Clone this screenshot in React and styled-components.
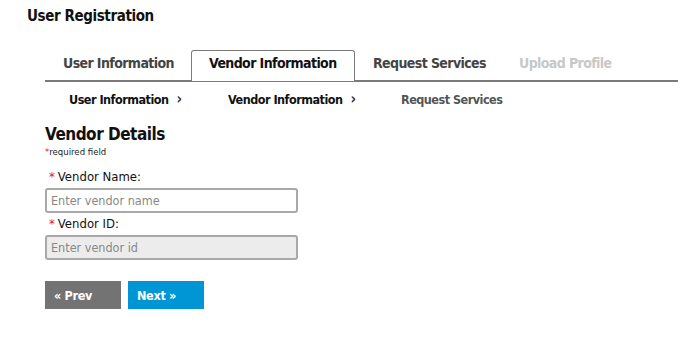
import React from 'react'
import styled, { createGlobalStyle } from 'styled-components'

const GlobalStyle = createGlobalStyle`
  html, body {
    margin: 0;
    padding: 0;
    background: #fff;
  }
  body {
    font-family: "DejaVu Sans", "Liberation Sans", sans-serif;
    font-stretch: condensed;
    color: #111;
  }
`

const StPage = styled.div`
  width: 678px;
  height: 339px;
  padding: 6px 0 0 27px;
  box-sizing: border-box;
  white-space: nowrap;
`
const StTitle = styled.h1`
  margin: 0;
  font-size: 15px;
  font-weight: bold;
  line-height: 20px;
  letter-spacing: -0.4px;
  color: #111;
`
const StTabs = styled.div`
  display: flex;
  margin: 24px 0 0 18px;
  border-bottom: 2px solid #7a7a7a;
  height: 30px;
`
const StTab = styled.div`
  box-sizing: border-box;
  width: ${(p) => (p.$width ? `${p.$width}px` : 'auto')};
  height: ${(p) => (p.$active ? '31px' : '30px')};
  padding: 0 0 0 17px;
  font-size: 14px;
  font-weight: bold;
  line-height: 25px;
  letter-spacing: -0.6px;
  color: ${(p) => (p.$disabled ? '#c8c8c8' : p.$active ? '#111' : '#444')};
  border: 1px solid ${(p) => (p.$active ? '#7a7a7a' : 'transparent')};
  border-bottom: none;
  border-radius: 3px 3px 0 0;
  background: #fff;
`
const StCrumbs = styled.div`
  display: flex;
  align-items: center;
  margin: 8px 0 0 42px;
  height: 18px;
`
const StCrumb = styled.span`
  font-size: 12.5px;
  font-weight: bold;
  letter-spacing: -0.5px;
  color: ${(p) => (p.$muted ? '#555' : '#111')};
  width: ${(p) => (p.$width ? `${p.$width}px` : 'auto')};
  display: inline-flex;
  align-items: center;
`
const StChevron = styled.span`
  margin-left: ${(p) => p.$offset}px;
  font-size: 15px;
  font-weight: bold;
  color: #333;
`
const StForm = styled.div`
  margin: 16px 0 0 18px;
  width: 253px;
`
const StHeading = styled.h2`
  margin: 0;
  font-size: 17px;
  font-weight: bold;
  line-height: 20px;
  letter-spacing: -0.5px;
`
const StNote = styled.div`
  margin-top: 2px;
  font-size: 9.5px;
  line-height: 12px;
  color: #222;
  & > span {
    color: #d22;
  }
`
const StLabel = styled.label`
  display: block;
  margin: ${(p) => p.$top}px 0 3px 4px;
  font-size: 13px;
  line-height: 17px;
  color: #111;
  & > span {
    color: #d22;
    margin-right: 3px;
  }
`
const StInput = styled.input`
  box-sizing: border-box;
  display: block;
  width: 253px;
  height: 25px;
  padding: 0 4px;
  border: 2px solid #a9a9a9;
  border-radius: 3px;
  font-family: inherit;
  font-stretch: condensed;
  font-size: 12.5px;
  color: #333;
  background: ${(p) => (p.disabled ? '#ececec' : '#fff')};
  &::placeholder {
    color: #888;
  }
`
const StButtons = styled.div`
  display: flex;
  gap: 7px;
  margin-top: 21px;
`
const StButton = styled.button`
  width: 76px;
  height: 28px;
  border: none;
  padding: 0 0 0 9px;
  text-align: left;
  font-family: inherit;
  font-stretch: condensed;
  font-size: 12.5px;
  font-weight: bold;
  letter-spacing: -0.3px;
  color: #fff;
  background: ${(p) => (p.$primary ? '#0096d6' : '#737373')};
`

const App = () => (
  <>
    <GlobalStyle />
    <StPage>
      <StTitle>User Registration</StTitle>
      <StTabs>
        <StTab $width={146}>User Information</StTab>
        <StTab $width={164} $active>Vendor Information</StTab>
        <StTab $width={146}>Request Services</StTab>
        <StTab $disabled>Upload Profile</StTab>
      </StTabs>
      <StCrumbs>
        <StCrumb $width={159}>
          User Information<StChevron $offset={8}>›</StChevron>
        </StCrumb>
        <StCrumb $width={173}>
          Vendor Information<StChevron $offset={8}>›</StChevron>
        </StCrumb>
        <StCrumb $muted>Request Services</StCrumb>
      </StCrumbs>
      <StForm>
        <StHeading>Vendor Details</StHeading>
        <StNote>
          <span>*</span>required field
        </StNote>
        <StLabel $top={10}>
          <span>*</span>Vendor Name:
        </StLabel>
        <StInput placeholder='Enter vendor name' />
        <StLabel $top={2}>
          <span>*</span>Vendor ID:
        </StLabel>
        <StInput placeholder='Enter vendor id' disabled />
        <StButtons>
          <StButton>« Prev</StButton>
          <StButton $primary>Next »</StButton>
        </StButtons>
      </StForm>
    </StPage>
  </>
)

export default App
